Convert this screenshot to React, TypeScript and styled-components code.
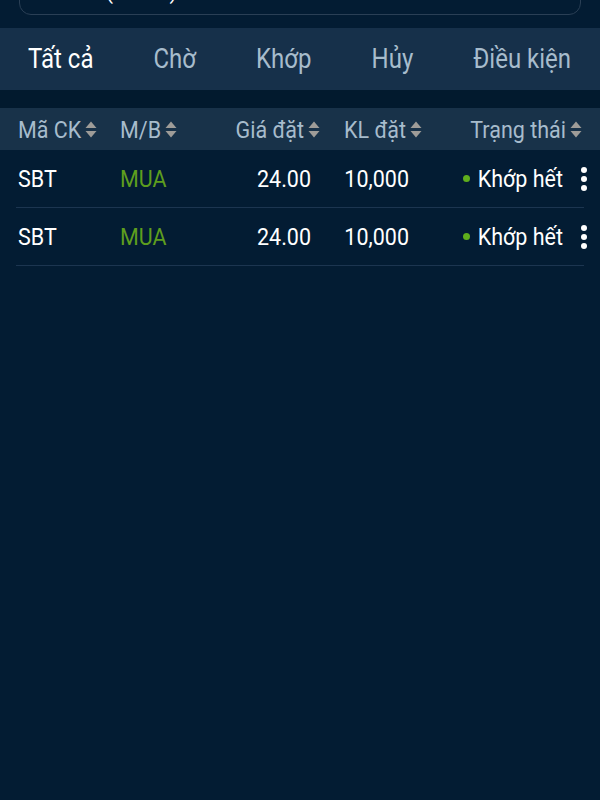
import React, { FC } from 'react'
import styled, { createGlobalStyle } from 'styled-components'

const GlobalStyle = createGlobalStyle`
  html, body {
    margin: 0;
    padding: 0;
    background: #031c33;
  }
  body {
    font-family: Roboto, "Noto Sans", "Liberation Sans", sans-serif;
  }
`

const Page = styled.div`
  min-height: 100vh;
  background: #031c33;
  overflow: hidden;
`

const SearchWrap = styled.div`
  height: 28px;
  padding: 0 19px;
  overflow: hidden;
`

const SearchBox = styled.div`
  margin-top: -32px;
  height: 45px;
  border: 1.5px solid #2a3f55;
  border-radius: 12px;
  padding-left: 20px;
  color: #ffffff;
  font-size: 22px;
  line-height: 45px;
`

// the screenshot is slightly taller than wide, so text is stretched a bit
const Tall = styled.span<{ $k?: number }>`
  display: inline-block;
  transform: scaleY(${p => p.$k ?? 1.1});
`

const Tabs = styled.div`
  display: flex;
  align-items: center;
  gap: 60px;
  height: 62px;
  padding-left: 28px;
  background: #16304a;
`

const Tab = styled.div<{ $active?: boolean }>`
  font-size: 24px;
  color: ${p => (p.$active ? '#ffffff' : '#a7bccc')};
  white-space: nowrap;
`

const Spacer = styled.div`
  height: 18px;
  background: #021a2e;
`

const columns = '102px 92px 110px 102px 1fr'

const HeaderRow = styled.div`
  display: grid;
  grid-template-columns: ${columns};
  align-items: center;
  height: 42px;
  padding: 0 16px;
  background: #183249;
  color: #a7bccc;
  font-size: 21.5px;
`

const HeadCell = styled.div<{ $right?: boolean; $pr?: number }>`
  display: flex;
  align-items: center;
  justify-content: ${p => (p.$right ? 'flex-end' : 'flex-start')};
  gap: 4px;
  padding-left: ${p => (p.$right ? 0 : 2)}px;
  padding-right: ${p => p.$pr ?? 0}px;
  white-space: nowrap;
`

const Body = styled.div`
  padding: 0 16px;
`

const Row = styled.div`
  display: grid;
  grid-template-columns: ${columns};
  align-items: center;
  height: 57px;
  border-bottom: 1px solid #1c3550;
  color: #ffffff;
  font-size: 21.5px;
`

const Cell = styled.div<{ $right?: boolean; $pr?: number; $color?: string }>`
  text-align: ${p => (p.$right ? 'right' : 'left')};
  padding-left: ${p => (p.$right ? 0 : 2)}px;
  padding-right: ${p => p.$pr ?? 0}px;
  color: ${p => p.$color || '#ffffff'};
  white-space: nowrap;
`

const StatusCell = styled.div`
  display: flex;
  align-items: center;
  justify-content: flex-end;
  margin-right: -3px;
`

const Dot = styled.span`
  width: 7px;
  height: 7px;
  border-radius: 50%;
  background: #5fae1c;
  margin-right: 8px;
`

const Kebab = styled.span`
  display: flex;
  flex-direction: column;
  gap: 3px;
  margin-left: 18px;
  span {
    width: 6px;
    height: 6px;
    border-radius: 50%;
    background: #ffffff;
  }
`

const SortIcon: FC = () => (
  <svg width="12" height="17" viewBox="0 0 12 17">
    <path d="M6 0.5 L11.5 7 H0.5 Z" fill="#9e9c98" />
    <path d="M6 16.5 L11.5 10 H0.5 Z" fill="#9e9c98" />
  </svg>
)

const tabs = ['Tất cả', 'Chờ', 'Khớp', 'Hủy', 'Điều kiện']

const orders = [
  { code: 'SBT', side: 'MUA', price: '24.00', qty: '10,000', status: 'Khớp hết' },
  { code: 'SBT', side: 'MUA', price: '24.00', qty: '10,000', status: 'Khớp hết' },
]

const App: FC = () => {
  return (
    <Page>
      <GlobalStyle />
      <SearchWrap>
        <SearchBox>Tất cả (HOSE)</SearchBox>
      </SearchWrap>
      <Tabs>
        {tabs.map((t, i) => (
          <Tab key={t} $active={i === 0}>
            <Tall $k={1.12}>{t}</Tall>
          </Tab>
        ))}
      </Tabs>
      <Spacer />
      <HeaderRow>
        <HeadCell>
          <Tall>Mã CK</Tall> <SortIcon />
        </HeadCell>
        <HeadCell>
          <Tall>M/B</Tall> <SortIcon />
        </HeadCell>
        <HeadCell $right>
          <Tall>Giá đặt</Tall> <SortIcon />
        </HeadCell>
        <HeadCell $right>
          <Tall>KL đặt</Tall> <SortIcon />
        </HeadCell>
        <HeadCell $right $pr={2}>
          <Tall>Trạng thái</Tall> <SortIcon />
        </HeadCell>
      </HeaderRow>
      <Body>
        {orders.map((o, i) => (
          <Row key={i}>
            <Cell>
              <Tall $k={1.15}>{o.code}</Tall>
            </Cell>
            <Cell $color="#5e9e1e">
              <Tall $k={1.15}>{o.side}</Tall>
            </Cell>
            <Cell $right $pr={9}>
              <Tall $k={1.15}>{o.price}</Tall>
            </Cell>
            <Cell $right $pr={13}>
              <Tall $k={1.15}>{o.qty}</Tall>
            </Cell>
            <StatusCell>
              <Dot />
              <Tall $k={1.15}>{o.status}</Tall>
              <Kebab>
                <span />
                <span />
                <span />
              </Kebab>
            </StatusCell>
          </Row>
        ))}
      </Body>
    </Page>
  )
}

export default App
